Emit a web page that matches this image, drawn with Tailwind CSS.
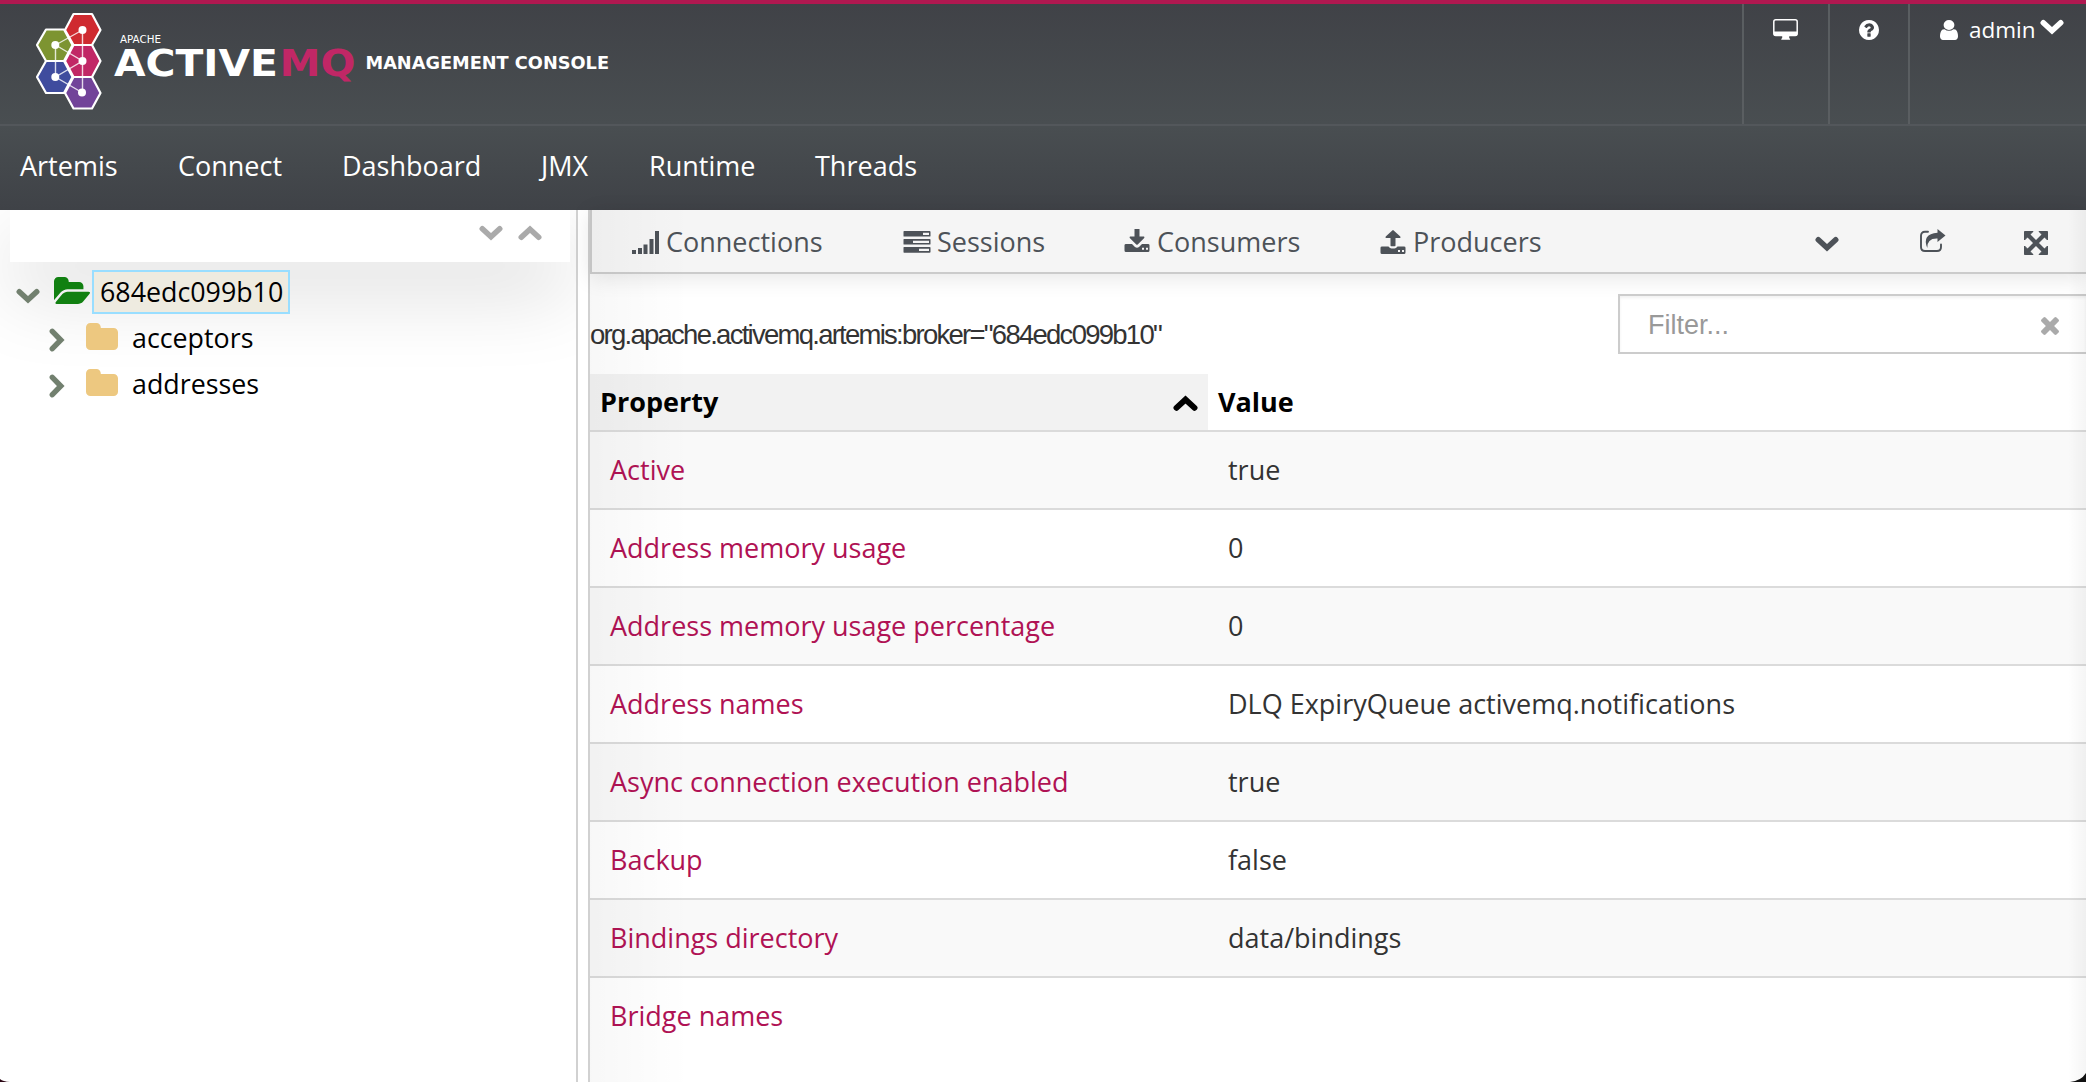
<!DOCTYPE html>
<html lang="en">
<head>
<meta charset="utf-8">
<title>ActiveMQ Management Console</title>
<script src="https://cdn.jsdelivr.net/npm/@tailwindcss/browser@4"></script>
</head>
<body class="bg-white">
<svg class="hidden">
  <symbol id="down" viewBox="0 0 24 16"><path d="M3.3 3.8 12 11.8 20.7 3.8" fill="none" stroke="currentColor" stroke-width="5.6" stroke-linecap="round"/></symbol>
  <symbol id="up" viewBox="0 0 24 16"><path d="M3.3 12.2 12 4.2 20.7 12.2" fill="none" stroke="currentColor" stroke-width="5.6" stroke-linecap="round"/></symbol>
  <symbol id="right" viewBox="0 0 16 24"><path d="M3.3 3.3 11.8 12 3.3 20.7" fill="none" stroke="currentColor" stroke-width="5.4" stroke-linecap="round"/></symbol>
  <symbol id="folder" viewBox="64 128 1664 1408" preserveAspectRatio="none"><path fill="currentColor" d="M1728 608v704q0 92-66 158t-158 66h-1216q-92 0-158-66t-66-158v-960q0-92 66-158t158-66h320q92 0 158 66t66 158v32h672q92 0 158 66t66 158z"/></symbol>
</svg>
<div class="flex h-[1082px] w-[2086px] flex-col overflow-hidden font-['Open_Sans',sans-serif] text-[27px] relative">
  <header class="flex h-[126px] shrink-0 justify-between border-t-4 border-b-2 border-t-[#b01850] border-b-[#53575b] bg-linear-to-b from-[#404247] to-[#494e51]">
    <svg class="h-[120px] w-[640px]" viewBox="0 4 640 120">
      <g stroke="#fff" stroke-width="2.200" stroke-linejoin="round">
        <path fill="#cf2a30" d="M65 30 73.500 14H92L100.500 30 92 45H73.500Z"/>
        <path fill="#7d9431" d="M37 45 46 29.500H64L72.500 45 64 61H46Z"/>
        <path fill="#c12766" d="M65 61 73.500 45H92L100.500 61 92 77H73.500Z"/>
        <path fill="#3f4c9e" d="M37 77 46 61H64L72.500 77 64 93H46Z"/>
        <path fill="#724399" d="M65 93 73.500 77H92L100.500 93 92 108.500H73.500Z"/>
      </g>
      <path d="M82.500 30V92.500M55.500 45V77M55.500 45 82.500 30M55.500 45 82.500 61 55.500 77 82 92.500" fill="none" stroke="#fff" stroke-opacity=".8" stroke-width="1.400"/>
      <g fill="#fff"><circle cx="82.500" cy="30" r="4"/><circle cx="55.300" cy="45" r="4"/><circle cx="82.500" cy="61" r="4"/><circle cx="55.300" cy="77" r="4"/><circle cx="82" cy="92.500" r="4"/></g>
      <g fill="#fff" font-family="'DejaVu Sans', sans-serif">
        <text x="120" y="43" font-size="10.400" textLength="41" lengthAdjust="spacingAndGlyphs">APACHE</text>
        <text x="114" y="76.300" font-size="37.500" font-weight="700" textLength="164" lengthAdjust="spacingAndGlyphs">ACTIVE</text>
        <text x="279.500" y="76.300" font-size="37.500" font-weight="700" fill="#c12766" textLength="76" lengthAdjust="spacingAndGlyphs">MQ</text>
        <text x="365.500" y="69" font-size="17.300" font-weight="700" textLength="243.500" lengthAdjust="spacingAndGlyphs">MANAGEMENT CONSOLE</text>
      </g>
    </svg>
    <div class="flex text-white">
      <div class="w-[86px] border-l-2 border-[#5a5e61] pl-[29px] pt-[15px]">
        <svg class="h-[21px] w-[25px]" viewBox="0 0 25 21"><rect x=".8" y=".8" width="23.400" height="15.800" rx="2" fill="none" stroke="#fff" stroke-width="1.500"/><path fill="#fff" d="M.8 12.500h23.400v2.500q0 2-2 2h-6v2q1 .5 1 1.700h-9q0-1.200 1-1.700v-2h-6.400q-2 0-2-2z"/></svg>
      </div>
      <div class="w-[80px] border-l-2 border-[#5a5e61] pl-[29px] pt-[16px]">
        <svg class="size-[20px]" viewBox="128 128 1536 1536"><path fill="#fff" d="M1024 1376v-192q0-14-9-23t-23-9h-192q-14 0-23 9t-9 23v192q0 14 9 23t23 9h192q14 0 23-9t9-23zm256-672q0-88-55.500-163t-138.500-116-170-41q-243 0-371 213-15 24 8 42l132 100q7 6 19 6 16 0 25-12 53-68 86-92 34-24 86-24 48 0 85.500 26t37.500 59q0 38-20 61t-68 45q-63 28-115.500 86.500t-52.500 125.500v36q0 14 9 23t23 9h192q14 0 23-9t9-23q0-19 21.500-49.500t54.500-49.500q32-18 49-28.500t46-35 44.500-48 28-60.500 12.500-81zm384 192q0 209-103 385.500t-279.500 279.500-385.500 103-385.500-103-279.500-279.500-103-385.500 103-385.500 279.500-279.500 385.500-103 385.500 103 279.500 279.500 103 385.500z"/></svg>
      </div>
      <div class="flex w-[178px] border-l-2 border-[#5a5e61] pl-[30px] pt-[11px] text-[22.5px] leading-[30px]">
        <svg class="mt-[5px] mr-[11px] h-[20px] w-[18px]" viewBox="256 128 1280 1536" preserveAspectRatio="none"><path fill="#fff" d="M1536 1399q0 109-62.500 187t-150.500 78h-854q-88 0-150.500-78t-62.500-187q0-85 8.500-160.500t31.500-152 58.500-131 94-89 134.500-34.500q131 128 313 128t313-128q76 0 134.500 34.500t94 89 58.500 131 31.500 152 8.500 160.500zm-256-887q0 159-112.500 271.500t-271.500 112.500-271.500-112.500-112.500-271.500 112.500-271.500 271.500-112.500 271.500 112.500 112.500 271.500z"/></svg>
        <span class="w-[71px]">admin</span>
        <svg class="mt-1 h-[16px] w-[24px]"><use href="#down"/></svg>
      </div>
    </div>
  </header>
  <nav class="flex h-[84px] shrink-0 bg-linear-to-b from-[#494e51] to-[#3f4247] pl-[20px] leading-[80px] text-white">
    <a class="w-[158px]">Artemis</a><a class="w-[164px]">Connect</a><a class="w-[199px]">Dashboard</a><a class="w-[108px]">JMX</a><a class="w-[166px]">Runtime</a><a>Threads</a>
  </nav>
  <div class="flex min-h-0 flex-1">
    <aside class="w-[576px] shrink-0 overflow-hidden text-[26.8px] text-black">
      <div class="mr-[6px] ml-[10px] flex h-[52px] gap-[15px] bg-white pl-[469px] pt-[15px] text-[#aaa] shadow-[0_30px_80px_rgba(0,0,0,0.15)]">
        <svg class="h-[16px] w-[24px]"><use href="#down"/></svg>
        <svg class="h-[16px] w-[24px]"><use href="#up"/></svg>
      </div>
      <ul class="relative pt-2">
        <li class="flex h-[44px] items-center pl-4">
          <svg class="mt-[7px] mr-[14px] h-[16px] w-[24px] text-[#72806f]"><use href="#down"/></svg>
          <svg class="mr-[2px] mb-[3px] h-[27px] w-[36px]" viewBox="0 128 1879 1408" preserveAspectRatio="none"><path fill="#118011" d="M1879 952q0 31-31 66l-336 396q-43 51-120.500 86.500t-143.500 35.500h-1088q-34 0-60.500-13t-26.500-43q0-31 31-66l336-396q43-51 120.500-86.500t143.500-35.500h1088q34 0 60.500 13t26.500 43zm-343-344v160h-832q-94 0-197 47.500t-164 119.500l-337 396-5 6q0-4-.500-12.500t-.500-12.500v-960q0-92 66-158t158-66h320q92 0 158 66t66 158v32h544q92 0 158 66t66 158z"/></svg>
          <span class="h-[44px] w-[198px] border-2 border-[#99deff] bg-[#eeebe0] pl-[6px] leading-[40px]">684edc099b10</span>
        </li>
        <li class="mt-[2px] flex h-[46px] items-center pl-[49px]">
          <svg class="mt-[1px] mr-[21px] h-[24px] w-[16px] text-[#72806f]"><use href="#right"/></svg>
          <svg class="mr-[14px] mb-[5px] h-[27px] w-[32px] text-[#edc880]"><use href="#folder"/></svg>
          <span class="mb-[2px]">acceptors</span>
        </li>
        <li class="flex h-[46px] items-center pl-[49px]">
          <svg class="mt-[1px] mr-[21px] h-[24px] w-[16px] text-[#72806f]"><use href="#right"/></svg>
          <svg class="mr-[14px] mb-[5px] h-[27px] w-[32px] text-[#edc880]"><use href="#folder"/></svg>
          <span class="mb-[2px]">addresses</span>
        </li>
      </ul>
    </aside>
    <div class="w-[14px] shrink-0 border-x-2 border-[#d1d1d1]"></div>
    <main class="relative min-w-0 flex-1">
      <div class="flex h-[64px] border-b-2 border-l-2 border-[#cbcbcb] bg-[#f5f5f5] leading-[64px] text-[#4d5258] shadow-[0_4px_22px_rgba(0,0,0,0.10)]">
        <div class="flex w-[270px] pl-10"><svg class="mt-[21px] mr-[6px] h-[24px] w-[28px]" viewBox="0 0 28 24"><path fill="#4d5258" d="M0 19h4v4H0zM6 17h4v6H6zM11.500 13.500h4V23h-4zM17.500 8h4v15h-4zM23 0h4v23h-4z"/></svg>Connections</div>
        <div class="flex w-[222px] pl-[41px]"><svg class="mt-[21px] mr-[6px] h-[22px] w-[28px]" viewBox="0 0 28 22"><path fill="#4d5258" fill-rule="evenodd" d="M1 0h25.500q1 0 1 1v4q0 .5-1 .5H1q-.5 0-.5-.5V1q0-1 .5-1zM20 1.800V4h6V1.800zM1 8h25.500q1 0 1 .5v4.500q0 .5-1 .5H1q-.5 0-.5-.5V8.500q0-.5.5-.5zM10 9.700V12h16V9.700zM1 16h25.500q1 0 1 .5V21q0 .7-1 .7H1q-.5 0-.5-.7v-4.500q0-.5.5-.5zM16 17.700V20h10v-2.300z"/></svg>Sessions</div>
        <div class="flex w-[257px] pl-10"><svg class="mt-[19px] mr-[6px] h-[24px] w-[27px]" viewBox="0 0 27 24"><path fill="#4d5258" fill-rule="evenodd" d="M10.500 0h5v7.500h4.500q1 .7 0 1.700L13.700 15.500q-.7.6-1.400 0L6 9.200q-1-1 0-1.700h4.500zM2 15h6l3 3q2 1.500 4 0l3-3h6q1.500 0 1.500 1.300v5.200q0 1.500-1.500 1.500H2Q.5 23 .5 21.500v-5.200Q.5 15 2 15zM18 18.800v2h2v-2zM22 18.800v2h2v-2z"/></svg>Consumers</div>
        <div class="flex w-[435px] pl-[39px]"><svg class="mt-[20px] mr-[6px] h-[24px] w-[27px]" viewBox="0 0 27 24"><path fill="#4d5258" fill-rule="evenodd" d="M10.500 15.500V8H6Q5 7.300 6 6.200L12.300.4q.7-.6 1.400 0L20 6.200q1 1.100 0 1.800h-4.500v7.500q0 .8-.8.800h-3.400q-.8 0-.8-.8zM2 16.500h6.500q1.500 2 3 2h3q1.500 0 3-2H24q1.500 0 1.500 1.300v4.700q0 1.500-1.500 1.500H2Q.5 24 .5 22.500v-4.700q0-1.300 1.500-1.300zM18 20v2h2v-2zM22 20v2h2v-2z"/></svg>Producers</div>
        <svg class="ml-[39px] mt-[26px] h-[16px] w-[24px] shrink-0"><use href="#down"/></svg>
        <svg class="ml-[81px] mt-[19px] h-[24px] w-[26px] shrink-0" viewBox="0 0 26 24"><path d="M8 2.800H5q-4 0-4 4V18q0 4 4 4h12q4 0 4-4v-2.500" fill="none" stroke="#4d5258" stroke-width="1.900" stroke-linecap="round"/><path fill="#4d5258" d="M17.500 0 25.500 6.500 17.500 13V9.500Q7 9 7.300 19 1.500 5 17.500 3.700z"/></svg>
        <svg class="ml-[78px] mt-[21px] h-[24px] w-[24px] shrink-0" viewBox="0 0 24 24"><path d="M4 4 20 20M20 4 4 20" stroke="#4d5258" stroke-width="4.200"/><path fill="#4d5258" stroke="#4d5258" stroke-linejoin="round" d="M.5.500h8.500L.500 9zM23.500.500v8.500L15 .5zM.5 23.500V15L9 23.500zM23.500 23.500H15l8.500-8.500z"/></svg>
      </div>
      <div class="flex h-[100px] justify-between">
        <h1 class="pt-[41px] font-['Liberation_Sans',sans-serif] text-[27.5px] leading-[40px] tracking-[-1.74px] whitespace-nowrap text-[#333]">org.apache.activemq.artemis:broker="684edc099b10"</h1>
        <div class="mt-5 flex h-[60px] w-[468px] items-center justify-between border-2 border-r-0 border-[#ccc] bg-white pl-7 pr-[27px] font-['Liberation_Sans',sans-serif] text-[27px] text-[#999] shadow-[inset_0_2px_3px_rgba(0,0,0,0.06)]">
          <span class="pt-[2px]">Filter...</span>
          <svg class="mt-[3px] size-[18px]" viewBox="302 366 1188 1188"><path fill="#aaa" d="M1490 1322q0 40-28 68l-136 136q-28 28-68 28t-68-28l-294-294-294 294q-28 28-68 28t-68-28l-136-136q-28-28-28-68t28-68l294-294-294-294q-28-28-28-68t28-68l136-136q28-28 68-28t68 28l294 294 294-294q28-28 68-28t68 28l136 136q28 28 28 68t-28 68l-294 294 294 294q28 28 28 68z"/></svg>
        </div>
      </div>
      <div class="grid h-[58px] grid-cols-[618px_1fr] border-b-2 border-[#dbdbdb] font-bold leading-[55px] text-black">
        <div class="flex items-start justify-between bg-[#f2f2f2] pl-[10px] pr-[10px]">Property<svg class="mt-[21px] h-[17px] w-[25px]"><use href="#up"/></svg></div>
        <div class="pl-[10px]">Value</div>
      </div>
      <div class="text-[#333] leading-[75px] [&>div]:grid [&>div]:h-[78px] [&>div]:grid-cols-[618px_1fr] [&>div]:border-b-2 [&>div]:border-[#dbdbdb] [&>div]:pl-5 [&>div:last-child]:border-0 [&>div:nth-child(odd)]:bg-[#f9f9f9] [&_a]:text-[#b01254]">
        <div><a>Active</a><span>true</span></div>
        <div><a>Address memory usage</a><span>0</span></div>
        <div><a>Address memory usage percentage</a><span>0</span></div>
        <div><a>Address names</a><span>DLQ ExpiryQueue activemq.notifications</span></div>
        <div><a>Async connection execution enabled</a><span>true</span></div>
        <div><a>Backup</a><span>false</span></div>
        <div><a>Bindings directory</a><span>data/bindings</span></div>
        <div><a>Bridge names</a><span></span></div>
      </div>
      <div class="pointer-events-none absolute inset-y-0 left-0 w-[100px] bg-linear-to-r from-black/[0.03] to-transparent"></div>
      <div class="pointer-events-none absolute inset-y-0 right-0 w-[18px] bg-linear-to-l from-black/[0.04] to-transparent"></div>
    </main>
  </div>
  <svg class="absolute bottom-0 left-0 h-[3px] w-[10px]" viewBox="0 0 10 3"><path d="M0 0Q3 2.500 10 3H0z" fill="#2a0513"/></svg>
  <svg class="absolute right-0 bottom-0 h-[9px] w-[16px]" viewBox="0 0 16 9"><path d="M16 0Q11 8 0 9H16z" fill="#111"/></svg>
</div>
</body>
</html>
